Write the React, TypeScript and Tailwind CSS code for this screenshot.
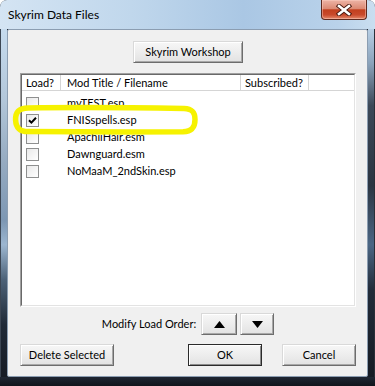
import React from 'react';

const font = "font-['Lato','Liberation_Sans',sans-serif]";

const Btn = ({ children, className = '', isDefault = false }: { children: React.ReactNode; className?: string; isDefault?: boolean }) => (
  <div
    className={`h-[22px] flex items-center justify-center text-[11px] text-black bg-[linear-gradient(180deg,#f7f7f7_0%,#ececec_55%,#e2e2e2_100%)] border ${
      isDefault
        ? 'border-[#2b2b2b] shadow-[inset_1px_1px_0_#ffffff,inset_-1px_-1px_0_#8a8a8a]'
        : 'border-t-[#d9d9d9] border-l-[#d9d9d9] border-r-[#6d6d6d] border-b-[#6d6d6d] shadow-[inset_1px_1px_0_#ffffff,inset_-1px_-1px_0_#a8a8a8]'
    } ${className}`}
  >
    {children}
  </div>
);

const CheckBox = ({ checked = false }: { checked?: boolean }) => (
  <div className="w-[13px] h-[13px] border border-[#8e8f8f] bg-[linear-gradient(135deg,#e9e9e9,#ffffff)] flex items-center justify-center">
    {checked && (
      <svg width="9" height="9" viewBox="0 0 9 9">
        <path d="M1 4.2 L3.4 6.6 L8 1.8" fill="none" stroke="#000" strokeWidth="2" />
      </svg>
    )}
  </div>
);

const mods = [
  { name: 'myTEST.esp', checked: false },
  { name: 'FNISspells.esp', checked: true },
  { name: 'ApachiiHair.esm', checked: false },
  { name: 'Dawnguard.esm', checked: false },
  { name: 'NoMaaM_2ndSkin.esp', checked: false },
];

export default function App() {
  return (
    <div className={`w-[375px] h-[386px] flex flex-col overflow-hidden rounded-t-[7px] bg-[#1b222d] ${font}`}>
      {/* title bar */}
      <div className="h-[29px] flex items-start bg-[linear-gradient(90deg,#d4e4f3_0%,#c0d7ec_35%,#aac7e4_65%,#b9d2ea_90%,#cadef0_100%)]">
        <div className="flex-1 pl-[8px] pt-[7px] text-[12px] leading-[15px] text-black">Skyrim Data Files</div>
        <div className="w-[46px] h-[20px] mr-[8px] flex items-center justify-center rounded-b-[4px] border border-t-0 border-[#5e2a1f] bg-[linear-gradient(180deg,#edb4a6_0%,#dc8a74_45%,#c2401f_52%,#c94a2c_78%,#e58a6c_100%)] shadow-[inset_0_0_0_1px_rgba(255,210,200,0.45)]">
          <svg width="16" height="12" viewBox="0 0 16 12">
            <path d="M3 2 L13 10 M13 2 L3 10" stroke="#4a1a10" strokeWidth="4.4" strokeLinecap="square" />
            <path d="M3 2 L13 10 M13 2 L3 10" stroke="#ffffff" strokeWidth="2.6" strokeLinecap="square" />
          </svg>
        </div>
      </div>

      <div className="flex flex-1">
        {/* left frame */}
        <div className="w-[7px] bg-[linear-gradient(180deg,#c6dbee_0%,#b3c7da_20%,#96abc1_38%,#7d97b3_55%,#9cb6d0_62%,#4d6278_72%,#202a37_85%,#161b24_100%)] border-l border-[#3c4653]" />

        {/* client area */}
        <div className="w-[361px] flex flex-col pl-[12px] pr-[11px] pt-[11px] pb-[10px] bg-[#f0f0f0] border border-[#8b9db1] rounded-[2px]">
          <div className="flex justify-center">
            <Btn className="w-[110px]">Skyrim Workshop</Btn>
          </div>

          {/* list view */}
          <div className="relative mt-[10px] h-[234px] border border-t-[#a0a0a0] border-l-[#a0a0a0] border-r-[#ffffff] border-b-[#ffffff]">
            <div className="h-full border border-t-[#696969] border-l-[#696969] border-r-[#e3e3e3] border-b-[#e3e3e3] bg-white flex flex-col">
              <div className="h-[16px] flex border-b border-[#d5d5d5] text-[11px] leading-[15px] text-black">
                <div className="w-[39px] pl-[4px] border-r border-[#d5d5d5]">Load?</div>
                <div className="w-[180px] pl-[6px] border-r border-[#d5d5d5]">Mod Title / Filename</div>
                <div className="w-[68px] pl-[4px] border-r border-[#d5d5d5]">Subscribed?</div>
                <div className="flex-1" />
              </div>
              <div className="pt-[4px] flex flex-col">
                {mods.map((m) => (
                  <div key={m.name} className="h-[17px] flex items-center text-[11px] text-black">
                    <div className="w-[39px] pl-[4px]">
                      <CheckBox checked={m.checked} />
                    </div>
                    <div className="pl-[6px]">{m.name}</div>
                  </div>
                ))}
              </div>
            </div>

            {/* yellow annotation loop */}
            <svg className="absolute left-[-9px] top-[30px]" width="186" height="32" viewBox="0 0 186 32">
              <path
                d="M16 4 C60 3.2 120 3.6 172 4.6 C181 5 183 9 183 15.5 C183 23 180 27.5 171 27.8 C120 28.2 60 28 16 27.6 C8 27.5 4 24 3.6 16 C3.4 8 7 4.2 16 4 Z"
                fill="none"
                stroke="#f6f200"
                strokeWidth="5.5"
              />
            </svg>
          </div>

          <div className="mt-[6px] flex items-center justify-center">
            <div className="text-[11px] text-black mr-[5px]">Modify Load Order:</div>
            <Btn className="w-[36px]">
              <svg width="11" height="7" viewBox="0 0 11 7"><path d="M5.5 0 L11 7 L0 7 Z" fill="#000" /></svg>
            </Btn>
            <Btn className="w-[34px] ml-[3px]">
              <svg width="11" height="7" viewBox="0 0 11 7"><path d="M0 0 L11 0 L5.5 7 Z" fill="#000" /></svg>
            </Btn>
          </div>

          <div className="mt-[9px] flex items-center">
            <Btn className="w-[94px]">Delete Selected</Btn>
            <div className="flex-1" />
            <Btn className="w-[74px]" isDefault>OK</Btn>
            <Btn className="w-[74px] ml-[20px]">Cancel</Btn>
          </div>
        </div>

        {/* right frame */}
        <div className="w-[7px] bg-[linear-gradient(180deg,#b8cfe5_0%,#8aa2ba_10%,#3c4858_22%,#2b3542_45%,#4b6684_62%,#222c3a_75%,#161b24_100%)] border-r border-[#2a2f38]" />
      </div>

      {/* bottom frame */}
      <div className="h-[9px] bg-[linear-gradient(180deg,#1f2632,#11151c)]" />
    </div>
  );
}
